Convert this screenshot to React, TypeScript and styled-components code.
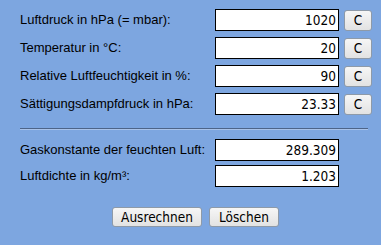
import React from "react";
import styled, { createGlobalStyle } from "styled-components";

const Global = createGlobalStyle`
  html, body { margin: 0; padding: 0; background: #7da6e0; }
  body { width: 381px; height: 245px; overflow: hidden; }
`;

const Page = styled.div`
  padding: 9px 0 0 20px;
  font-family: "Liberation Sans", Arial, sans-serif;
  font-size: 13px;
  color: #000;
`;

const Grid = styled.div<{ $gap: number }>`
  display: grid;
  grid-template-columns: 190px 124px 28px;
  column-gap: 5px;
  row-gap: ${(p) => p.$gap}px;
  align-items: center;
`;

const Label = styled.div`
  line-height: 22px;
  white-space: nowrap;
`;

const Field = styled.div`
  box-sizing: border-box;
  height: 22px;
  background: #fff;
  border: 1px solid #000;
  text-align: right;
  padding: 0 2px;
  font-family: "DejaVu Sans Condensed", "DejaVu Sans", sans-serif;
  font-stretch: condensed;
  font-size: 13.5px;
  line-height: 20px;
`;

const Btn = styled.button<{ $w?: number }>`
  box-sizing: border-box;
  height: ${(p) => (p.$w ? 20 : 21)}px;
  width: ${(p) => (p.$w ? `${p.$w}px` : "28px")};
  padding: 0;
  border: 1px solid #8e9aa8;
  border-radius: 3px;
  background: linear-gradient(#f6f6f6, #e2e2e2);
  font-family: "DejaVu Sans Condensed", "DejaVu Sans", sans-serif;
  font-stretch: condensed;
  font-size: 13.5px;
  color: #000;
  line-height: 18px;
`;

const Rule = styled.div`
  width: 348px;
  height: 1px;
  background: #4d6488;
  border-bottom: 1px solid #a9c3ea;
  margin: 13px 0 9px;
`;

const Actions = styled.div`
  display: flex;
  gap: 7px;
  margin: 20px 0 0 92px;
`;

const rows1 = [
  ["Luftdruck in hPa (= mbar):", "1020"],
  ["Temperatur in °C:", "20"],
  ["Relative Luftfeuchtigkeit in %:", "90"],
  ["Sättigungsdampfdruck in hPa:", "23.33"],
];
const rows2 = [
  ["Gaskonstante der feuchten Luft:", "289.309"],
  ["Luftdichte in kg/m³:", "1.203"],
];

export default function App() {
  return (
    <Page>
      <Global />
      <Grid $gap={6}>
        {rows1.map(([l, v]) => (
          <React.Fragment key={l}>
            <Label>{l}</Label>
            <Field>{v}</Field>
            <Btn>C</Btn>
          </React.Fragment>
        ))}
      </Grid>
      <Rule />
      <Grid $gap={4}>
        {rows2.map(([l, v]) => (
          <React.Fragment key={l}>
            <Label>{l}</Label>
            <Field>{v}</Field>
            <span />
          </React.Fragment>
        ))}
      </Grid>
      <Actions>
        <Btn $w={90}>Ausrechnen</Btn>
        <Btn $w={70}>Löschen</Btn>
      </Actions>
    </Page>
  );
}
